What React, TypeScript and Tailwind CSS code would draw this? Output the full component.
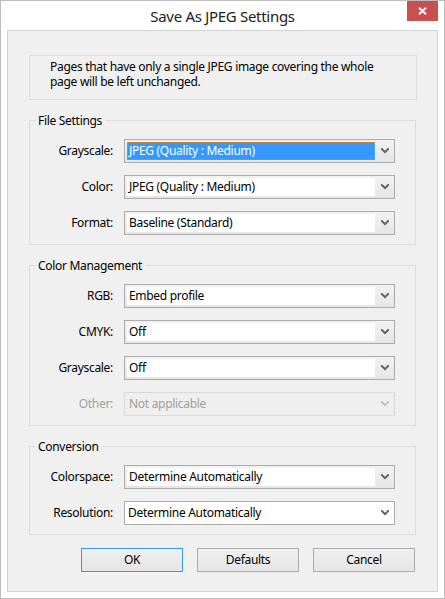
import React from "react";

const FONT = { fontFamily: '"Noto Sans", "Open Sans", sans-serif' };

function Chevron({ color }: { color: string }) {
  return (
    <svg width="8" height="6" viewBox="0 0 8 6" className="block">
      <path d="M0.8 1 L4 4.2 L7.2 1" fill="none" stroke={color} strokeWidth="2" strokeLinecap="square" />
    </svg>
  );
}

type Variant = "normal" | "focused" | "plain" | "disabled";

function Combo({ value, variant = "normal" }: { value: string; variant?: Variant }) {
  if (variant === "plain") {
    return (
      <div className="w-[271px] h-[24px] border border-[#acacac] bg-white flex items-center">
        <div className="flex-1 pl-[3px] text-[12px] text-black leading-[16px] whitespace-nowrap">{value}</div>
        <div className="w-[19px] flex items-center justify-center">
          <Chevron color="#606060" />
        </div>
      </div>
    );
  }
  if (variant === "disabled") {
    return (
      <div className="w-[271px] h-[24px] border border-[#d9d9d9] bg-[#efefef] flex items-center">
        <div className="flex-1 pl-[4px] text-[12px] text-[#a0a0a0] leading-[16px] whitespace-nowrap">{value}</div>
        <div className="w-[19px] flex items-center justify-center">
          <Chevron color="#c2c2c2" />
        </div>
      </div>
    );
  }
  const focused = variant === "focused";
  return (
    <div className="w-[271px] h-[24px] border border-[#acacac] bg-gradient-to-b from-[#f2f2f2] to-[#e6e6e6] flex pl-[2px] py-[2px]">
      <div
        className={
          focused
            ? "flex-1 flex items-center pl-[2px] bg-[#3399ff] text-white outline-1 outline-dotted outline-[#d98a3a] -outline-offset-1 text-[12px] leading-[16px] whitespace-nowrap"
            : "flex-1 flex items-center pl-[2px] bg-white text-black text-[12px] leading-[16px] whitespace-nowrap"
        }
      >
        {value}
      </div>
      <div className="w-[19px] flex items-center justify-center">
        <Chevron color="#606060" />
      </div>
    </div>
  );
}

function Row({ label, value, variant, disabled }: { label: string; value: string; variant?: Variant; disabled?: boolean }) {
  return (
    <div className="flex items-center h-[24px]">
      <div className={"w-[83px] mr-[11px] text-right text-[12px] leading-[16px] " + (disabled ? "text-[#a0a0a0]" : "text-black")}>
        {label}
      </div>
      <Combo value={value} variant={variant} />
    </div>
  );
}

function Group({ title, children }: { title: string; children: React.ReactNode }) {
  return (
    <fieldset className="w-[387px] border border-[#dcdcdc] pt-[11px] pb-[9px] mt-[13px]">
      <legend className="ml-[5px] px-[3px] text-[12px] leading-[15px] text-black">{title}</legend>
      <div className="flex flex-col gap-[12px]">{children}</div>
    </fieldset>
  );
}

function Button({ label, primary }: { label: string; primary?: boolean }) {
  return (
    <button
      className={
        "w-[102px] h-[24px] border bg-gradient-to-b from-[#f0f0f0] to-[#e5e5e5] text-[12px] leading-[16px] text-black flex items-center justify-center tracking-[-0.3px] " +
        (primary ? "border-[#3399ff]" : "border-[#acacac]")
      }
    >
      {label}
    </button>
  );
}

export default function App() {
  return (
    <div style={FONT} className="relative w-[445px] h-[599px] border border-[#bdbdbd] bg-white flex flex-col px-[6px] pb-[6px] tracking-[-0.3px]">
      <div className="h-[29px] pt-[1px] flex items-center justify-center text-[15px] text-[#222] leading-[20px]">Save As JPEG Settings</div>
      <button className="absolute top-0 right-[6px] w-[31px] h-[20px] bg-[#c75050] flex items-center justify-center">
        <svg width="9" height="8" viewBox="0 0 9 8" className="block">
          <path d="M1 0.8 L8 7.2 M8 0.8 L1 7.2" stroke="white" strokeWidth="1.9" />
        </svg>
      </button>
      <div className="flex-1 border border-[#d4d4d4] bg-[#f0f0f0] pl-[21px] pt-[24px] flex flex-col">
        <div className="w-[388px] h-[45px] border border-[#dcdcdc] pl-[20px] pt-[3px] text-[12px] leading-[15px] text-black">
          <div className="whitespace-nowrap">Pages that have only a single JPEG image covering the whole</div>
          <div className="whitespace-nowrap">page will be left unchanged.</div>
        </div>
        <Group title="File Settings">
          <Row label="Grayscale:" value="JPEG (Quality : Medium)" variant="focused" />
          <Row label="Color:" value="JPEG (Quality : Medium)" />
          <Row label="Format:" value="Baseline (Standard)" />
        </Group>
        <Group title="Color Management">
          <Row label="RGB:" value="Embed profile" />
          <Row label="CMYK:" value="Off" />
          <Row label="Grayscale:" value="Off" />
          <Row label="Other:" value="Not applicable" variant="disabled" disabled />
        </Group>
        <Group title="Conversion">
          <Row label="Colorspace:" value="Determine Automatically" />
          <Row label="Resolution:" value="Determine Automatically" variant="plain" />
        </Group>
        <div className="flex gap-[14px] ml-[52px] mt-[13px]">
          <Button label="OK" primary />
          <Button label="Defaults" />
          <Button label="Cancel" />
        </div>
      </div>
    </div>
  );
}
